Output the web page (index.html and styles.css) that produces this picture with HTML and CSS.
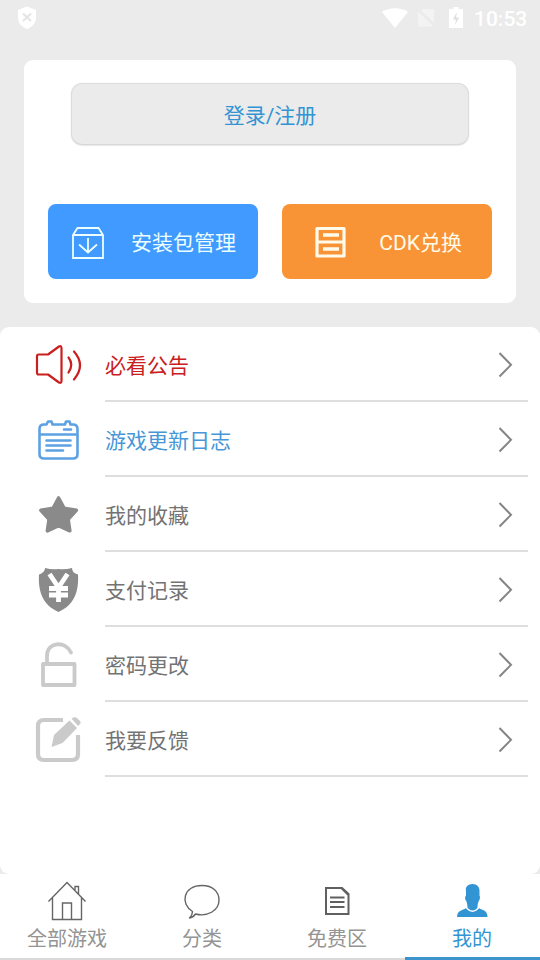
FILE: index.html
```html
<!DOCTYPE html>
<html lang="zh-CN">
<head>
<meta charset="utf-8">
<meta name="viewport" content="width=device-width">
<title>我的</title>
<link rel="stylesheet" href="styles.css">
</head>
<body>
<div class="screen">
  <header class="status">
    <svg class="status-shield" width="20" height="24" viewBox="0 0 20 24"><path d="M10 0.500 19 4v8c0 5-4 9-9 11-5-2-9-6-9-11V4z" fill="#fff"/><path d="m6 7.500 8 7.500M14 7.500 6 15" stroke="#e4e4e4" stroke-width="2"/></svg>
    <svg width="28" height="22" viewBox="0 0 28 22"><path d="M1 5C8 0 20 0 27 5L14 21z" fill="#fff"/></svg>
    <svg class="status-sim" width="18" height="22" viewBox="0 0 18 22"><path d="M6 2h11v13.500L4 3.500zM1 4.500 16.500 19.500H1z" fill="#f3f3f3"/></svg>
    <svg class="status-battery" width="16" height="24" viewBox="0 0 16 24"><path d="M5.500 1h5v2H15v19H1V3h4.500z" fill="#fff"/><path d="m9 6-4 7.500h3l-1 5.500 4-7.500H8z" fill="#dedede"/></svg>
    <span class="clock">10:53</span>
  </header>

  <section class="card">
    <button class="login">登录/注册</button>
    <div class="actions">
      <button class="action action-blue">
        <svg width="34" height="34" viewBox="0 0 34 34" fill="none" stroke="#ecffff" stroke-width="1.800"><path d="M2 9v23h30V9L27.500 2h-21zM2 9h30M17 12v14M8 18.500l9 8 9-8"/></svg>
        <span>安装包管理</span>
      </button>
      <button class="action action-orange">
        <svg width="34" height="34" viewBox="0 0 34 34" fill="none" stroke="#fffbea"><path d="M3 3.500h27v27.500H3zM3 17h27" stroke-width="3.200" stroke-linejoin="round"/><path d="M9 10h16M9 24h16" stroke-width="3.400"/></svg>
        <span>CDK兑换</span>
      </button>
    </div>
  </section>

  <main class="panel">
    <a class="row row-red">
      <svg class="icon" viewBox="0 0 48 73" fill="none" stroke="#c9201f" stroke-width="2.200" stroke-linecap="round" stroke-linejoin="round"><path d="M4.500 27.500Q3 27.500 3 29.500V45.500Q3 47.500 4.500 47.500H14L25 55.500Q27.500 56.500 27.500 54V21.500Q27.500 18 25 19.500L14 27.500z"/><path d="M34.500 30.500q5.500 7 0 15M40 24.500q12 13.500 0 28"/></svg>
      <span class="label">必看公告</span>
      <svg class="chevron" viewBox="0 0 15 27"><path d="M1.500 2 13 13.800 1.500 25.500"/></svg>
    </a>
    <a class="row row-blue">
      <svg class="icon" viewBox="0 0 48 73" fill="none" stroke="#5da1e3" stroke-width="2.600" stroke-linecap="round" stroke-linejoin="round"><path d="M12.500 22.500H10Q5.500 22.500 5.500 27V52Q5.500 56.500 10 56.500H39Q43.500 56.500 43.500 52V27Q43.500 22.500 39 22.500H36.500L35.500 19.500H32L31 22.500H18.500L17.500 19.500H14z M6 32.500H43M30 27.500h7M12.500 38.500H36.500M12.500 43.500H36.500M12.500 48.500H29"/></svg>
      <span class="label">游戏更新日志</span>
      <svg class="chevron" viewBox="0 0 15 27"><path d="M1.500 2 13 13.800 1.500 25.500"/></svg>
    </a>
    <a class="row">
      <svg class="icon" viewBox="0 0 48 73" fill="#8a8a8a" stroke="#8a8a8a" stroke-width="3.600" stroke-linejoin="round"><path d="M24.600 21 30 31.200 42.300 33.300 34.100 42.300 35.800 53.800 24.600 48.600 13.400 53.800 15.100 42.300 6.900 33.300 19.200 31.200z"/></svg>
      <span class="label">我的收藏</span>
      <svg class="chevron" viewBox="0 0 15 27"><path d="M1.500 2 13 13.800 1.500 25.500"/></svg>
    </a>
    <a class="row">
      <svg class="icon" viewBox="0 0 48 73"><path d="M11 16Q18 18 24.500 17 31 18 38 16 38 21 44 22.500C45 40 40 53 24.500 60 9 53 4 40 5 22.500 11 21 11 16 11 16z" fill="#8a8a8a"/><path d="m15.500 22 9 13.500 9-13.500M24.500 34v16M15 36.500h19M15 43h19" fill="none" stroke="#fff" stroke-width="4.800"/></svg>
      <span class="label">支付记录</span>
      <svg class="chevron" viewBox="0 0 15 27"><path d="M1.500 2 13 13.800 1.500 25.500"/></svg>
    </a>
    <a class="row">
      <svg class="icon" viewBox="0 0 48 73" fill="none" stroke="#cacaca" stroke-width="3.800" stroke-linecap="round" stroke-linejoin="round"><path d="M9 37h31.500v21H9zM13 36V29C13 14.500 31.500 13.500 37 25.500"/></svg>
      <span class="label">密码更改</span>
      <svg class="chevron" viewBox="0 0 15 27"><path d="M1.500 2 13 13.800 1.500 25.500"/></svg>
    </a>
    <a class="row">
      <svg class="icon" viewBox="0 0 48 73"><path d="M29 18H10Q4 18 4 24V52Q4 58 10 58H38Q44 58 44 52V33" fill="none" stroke="#cacaca" stroke-width="4.200"/><path d="m17.500 45 2.500-12L35.500 18.500 43 26 28.500 41z" fill="#cacaca"/><path d="m37.500 16.500 2-1q2-1 4 1l2.500 2.500q1.500 2-.5 3.500l-1.500 1.500z" fill="#cacaca"/></svg>
      <span class="label">我要反馈</span>
      <svg class="chevron" viewBox="0 0 15 27"><path d="M1.500 2 13 13.800 1.500 25.500"/></svg>
    </a>
  </main>

  <nav class="tabs">
    <a class="tab">
      <svg width="40" height="42" viewBox="0 0 40 42" fill="none" stroke="#666" stroke-width="1.400"><path d="M1.500 21.500 20 2.500 38.500 21.500M5.500 18V39.500H34.500V18M15.500 39V23H24.500V39M28 10V6.500h3.500V14"/></svg>
      <span>全部游戏</span>
    </a>
    <a class="tab">
      <svg width="40" height="42" viewBox="0 0 40 42" fill="none" stroke="#666" stroke-width="1.400" stroke-linejoin="round"><path d="M10.500 31.500C-2 24 1 5.500 20 5.500 31 5.500 37 12 37 20 37 31 25 37 13.500 34Q11 37.500 7.500 38 10.500 35 10.500 31.500z"/></svg>
      <span>分类</span>
    </a>
    <a class="tab">
      <svg width="40" height="42" viewBox="0 0 40 42" fill="none" stroke="#606060" stroke-width="2"><path d="M9 8H25L31.500 14V34H9z"/><path d="M24.500 8.500 31 15" stroke-width="1.500"/><path d="M13 17.500H27.500M13 22H27.500M13 27H27.500"/></svg>
      <span>免费区</span>
    </a>
    <a class="tab tab-active">
      <svg width="40" height="42" viewBox="0 0 40 42" fill="#3394d3"><path d="M5 37Q5 32 9 30.500L14.500 28H26.500L32 30.500Q35.500 32 35.500 37z"/><path d="M14 11C13 7 16 4 20.500 4S28 7 27.500 12V16C28.500 16 28 20 26.500 21.500 26 23.500 25.500 24 25.500 28.500Q20.500 33 15.500 28.500C15.500 24 15 23.500 14.500 21.500 13 20 12.500 16 14 16z"/><path d="M14.500 28Q20.500 34.500 26.500 28" fill="none" stroke="#fff" stroke-width="1.400"/></svg>
      <span>我的</span>
    </a>
  </nav>
</div>
</body>
</html>
```
FILE: styles.css
```css
* {
  box-sizing: border-box;
}

body {
  margin: 0;
  background: #ebebeb;
  font-family: Roboto, "Noto Sans CJK SC", sans-serif;
  font-size: 21px;
}

.screen {
  display: flex;
  flex-direction: column;
  width: 540px;
  height: 960px;
  background: #ebebeb;
  overflow: hidden;
}

svg {
  display: block;
  flex: none;
}

button {
  border: 0;
  padding: 0;
  font: inherit;
}

.status {
  display: flex;
  align-items: center;
  height: 36px;
  padding: 0 12px 0 17px;
  flex: none;
  color: #fff;
}

.status-shield {
  margin-right: auto;
}

.status-sim {
  margin-left: 8px;
}

.status-battery {
  margin: 0 10px 0 13px;
}

.clock {
  width: 54px;
  font-size: 21px;
  font-weight: 500;
  line-height: 36px;
  padding-top: 2px;
}

.card {
  display: flex;
  flex-direction: column;
  justify-content: space-between;
  flex: none;
  height: 243px;
  margin: 24px 24px;
  padding: 24px;
  border-radius: 9px;
  background: #fff;
}

.login {
  height: 60px;
  margin: 0 24px;
  padding-bottom: 1px;
  border-radius: 10px;
  background: #ebebeb;
  box-shadow: 0 0 1px 1px #dadada, 0 1px 2px #bbb;
  color: #3394d3;
}

.actions {
  display: grid;
  grid-template-columns: 1fr 1fr;
  gap: 24px;
}

.action {
  display: flex;
  align-items: center;
  justify-content: space-between;
  height: 75px;
  border-radius: 8px;
  white-space: nowrap;
}

.action span {
  padding-bottom: 3px;
}

.action-blue {
  padding: 2px 22px 0 23px;
  background: #409aff;
  color: #ecffff;
}

.action-orange {
  padding: 0 30px 0 32px;
  background: #f99436;
  color: #fffbea;
}

.action-orange span {
  padding-bottom: 1px;
}

.panel {
  flex: 1;
  background: #fff;
  border-radius: 9px;
}

.row {
  display: flex;
  height: 75px;
  padding: 0 12px 0 34px;
  color: #737373;
}

.row-red {
  color: #c9201f;
}

.row-blue {
  color: #4797d8;
}

.icon {
  width: 48px;
  height: 73px;
  margin-right: 23px;
}

.label {
  flex: 1;
  border-bottom: 2px solid #dedede;
  line-height: 78px;
}

.chevron {
  box-sizing: content-box;
  width: 15px;
  height: 27px;
  padding: 24px 15px 22px 0;
  border-bottom: 2px solid #dedede;
  fill: none;
  stroke: #858585;
  stroke-width: 2;
}

.tabs {
  display: grid;
  grid-template-columns: repeat(4, 1fr);
  flex: none;
  height: 86px;
  background: #fff;
}

.tab {
  display: flex;
  flex-direction: column;
  align-items: center;
  padding: 6px 1px 0 0;
  border-bottom: 2px solid #dadada;
  font-size: 20px;
  line-height: 35px;
  color: #949494;
}

.tab-active {
  border-bottom: 3px solid #3b94cb;
  color: #3394d3;
}
```
